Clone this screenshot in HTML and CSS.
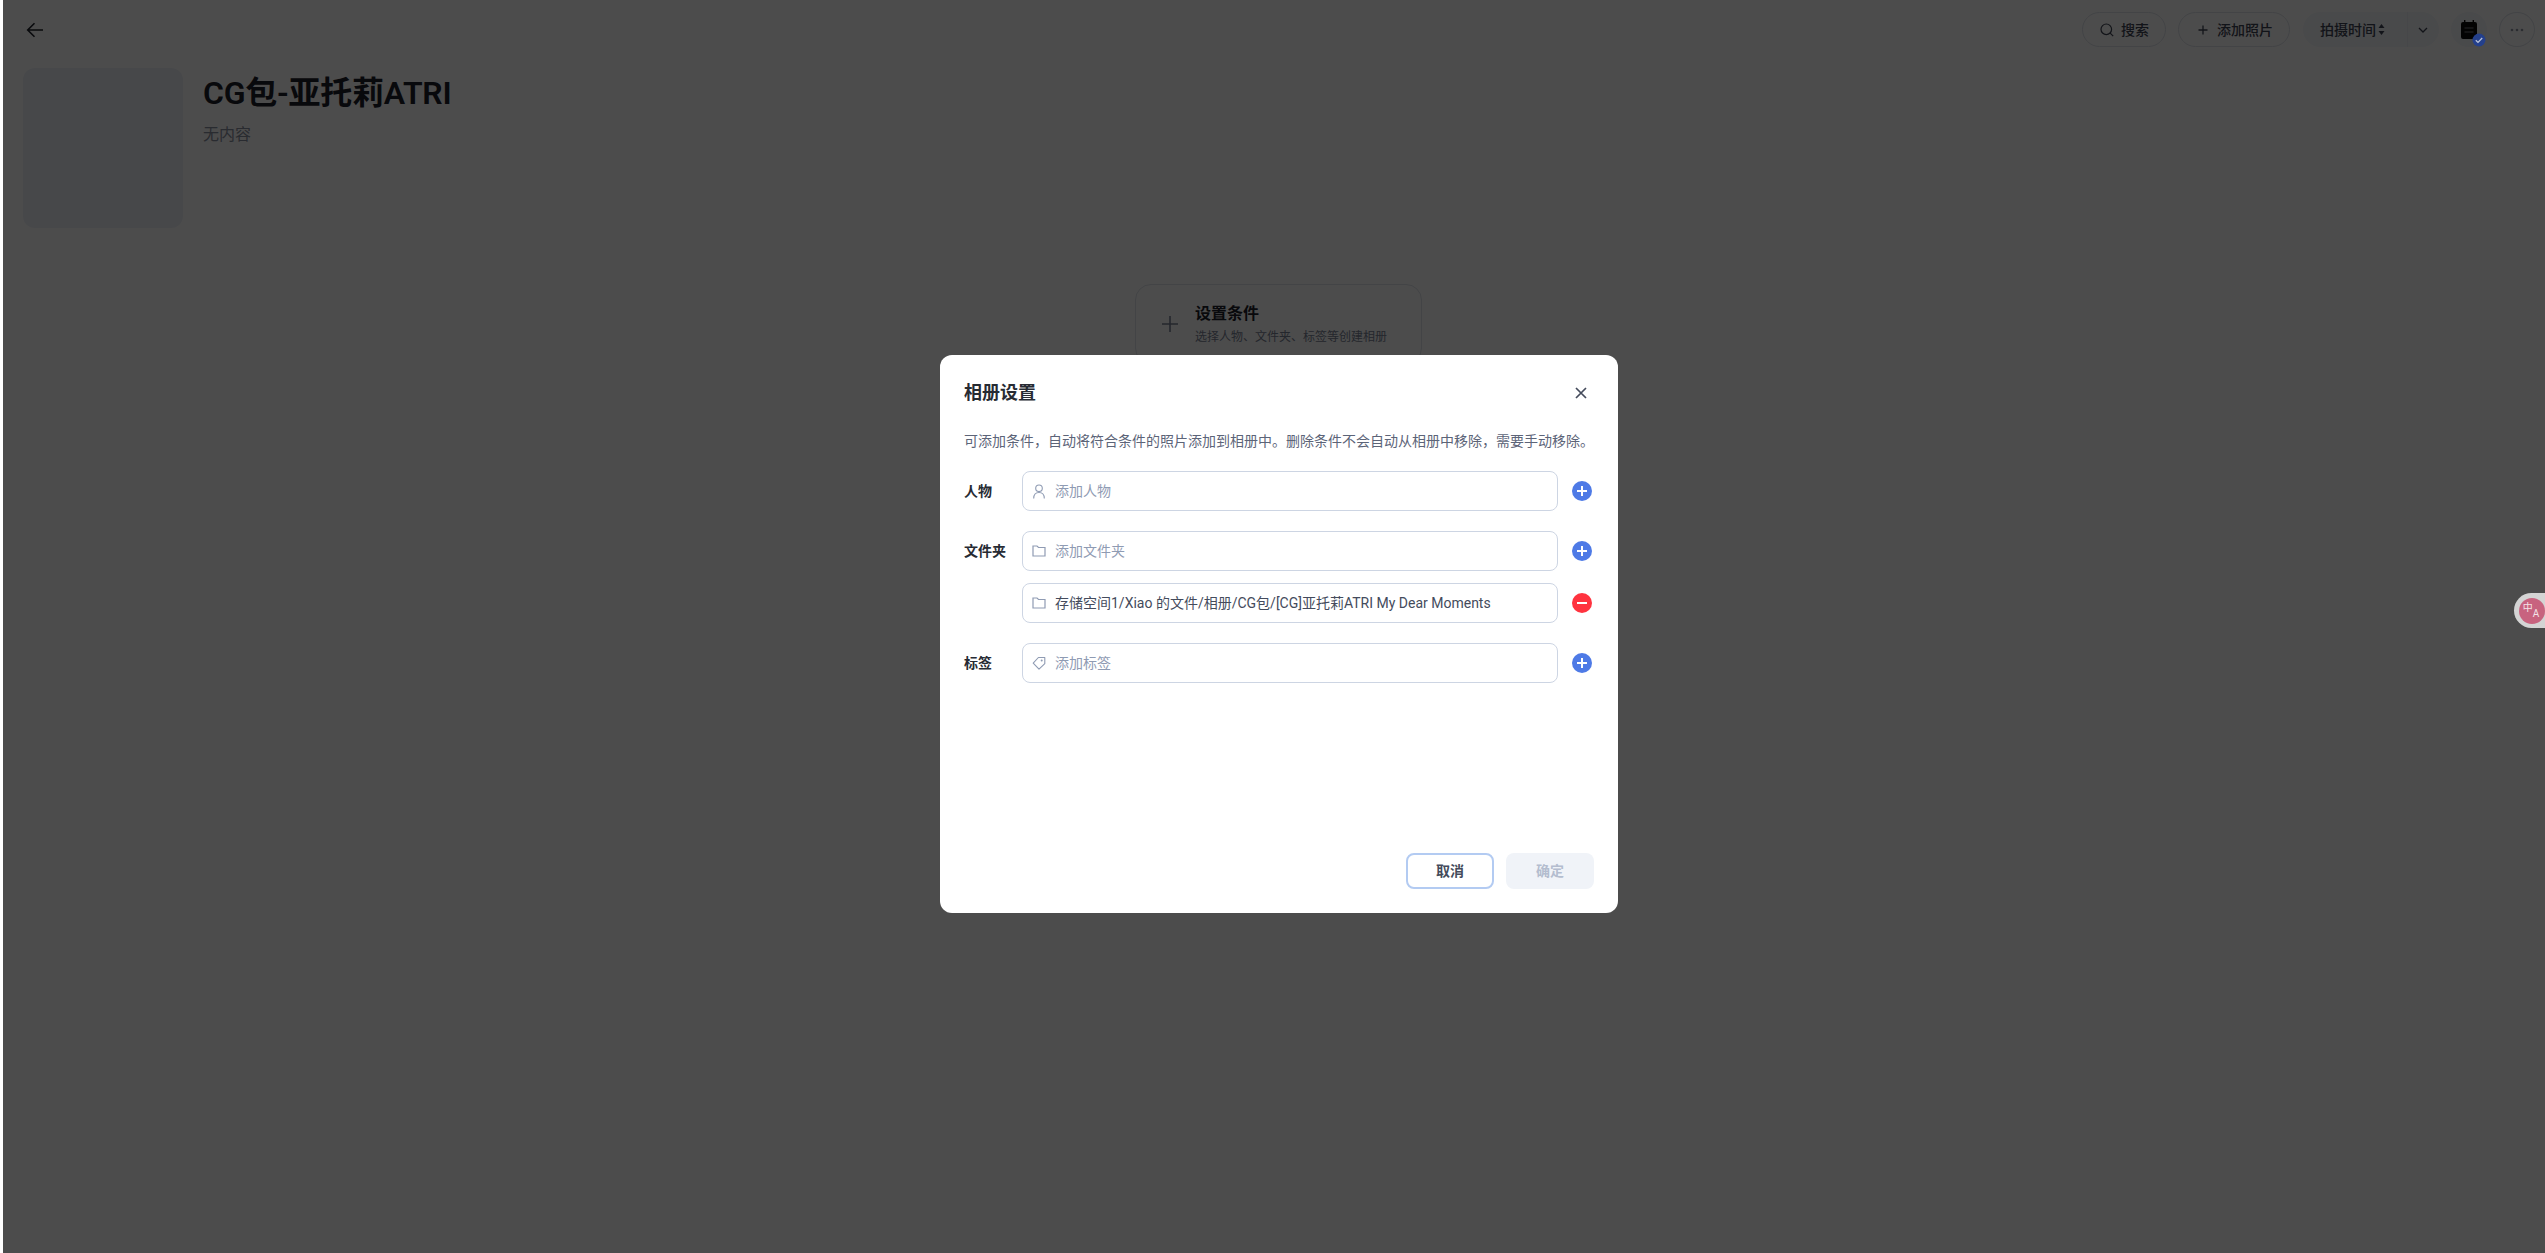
FILE: index.html
```html
<!DOCTYPE html>
<html lang="zh-CN">
<head>
    <meta charset="UTF-8">
    <title>相册设置</title>
    <link rel="stylesheet" href="styles.css">
</head>
<body>
    <div class="page">
        <div class="topbar">
            <svg class="back-icon" width="18" height="18" viewBox="0 0 18 18"><path d="M17 9H2M8.500 2.200 1.700 9l6.800 6.800" fill="none" stroke="currentColor" stroke-width="1.600"/></svg>
            <div class="toolbar">
                <div class="pill">
                    <svg width="14" height="14" viewBox="0 0 14 14"><circle cx="6.300" cy="6.300" r="5.300" fill="none" stroke="currentColor" stroke-width="1.200"/><path d="m10.200 10.200 3 3" stroke="currentColor" stroke-width="1.200"/></svg>
                    <span>搜索</span>
                </div>
                <div class="pill pill-add">
                    <svg width="10" height="10" viewBox="0 0 10 10"><path d="M5 .5v9M.5 5h9" stroke="currentColor" stroke-width="1.300"/></svg>
                    <span>添加照片</span>
                </div>
                <div class="sort">
                    <div class="sort-label">
                        <span>拍摄时间</span>
                        <svg width="7" height="11" viewBox="0 0 7 11"><path d="M3.500 0 6.500 4h-6zM3.500 11 .5 7h6z" fill="currentColor"/></svg>
                    </div>
                    <div class="sort-arrow">
                        <svg width="10" height="6" viewBox="0 0 10 6"><path d="m1 1 4 4 4-4" fill="none" stroke="currentColor" stroke-width="1.300"/></svg>
                    </div>
                </div>
                <div class="round round-fill">
                    <svg width="16" height="19" viewBox="0 0 16 19"><path d="M3 0h1.400v2h7.200V0H13v2h1a2 2 0 0 1 2 2v13a2 2 0 0 1-2 2H2a2 2 0 0 1-2-2V4a2 2 0 0 1 2-2h1z" fill="#0b0b0c"/><path d="M3.500 8h9M3.500 12h9" stroke="#5a5a5a" stroke-width="1.600"/></svg>
                    <svg class="note-badge" width="14" height="14" viewBox="0 0 14 14"><circle cx="7" cy="7" r="6.500" fill="#24408c"/><path d="m3.800 7.200 2.200 2.200 4.200-4.400" fill="none" stroke="#b9c2d8" stroke-width="1.300"/></svg>
                </div>
                <div class="round round-line">
                    <svg width="14" height="4" viewBox="0 0 14 4"><circle cx="2" cy="2" r="1.300" fill="currentColor"/><circle cx="7" cy="2" r="1.300" fill="currentColor"/><circle cx="12" cy="2" r="1.300" fill="currentColor"/></svg>
                </div>
            </div>
        </div>

        <div class="hero">
            <div class="cover"></div>
            <div class="hero-info">
                <h1>CG包-亚托莉ATRI</h1>
                <p>无内容</p>
            </div>
        </div>

        <div class="empty">
            <div class="empty-card">
                <svg width="18" height="18" viewBox="0 0 18 18"><path d="M9 1v16M1 9h16" stroke="currentColor" stroke-width="1.600"/></svg>
                <div>
                    <div class="empty-title">设置条件</div>
                    <div class="empty-desc">选择人物、文件夹、标签等创建相册</div>
                </div>
            </div>
        </div>
    </div>

    <div class="overlay">
        <div class="dialog">
            <div class="dialog-head">
                <h2>相册设置</h2>
                <svg class="close-icon" width="12" height="12" viewBox="0 0 12 12"><path d="m1 1 10 10M11 1 1 11" stroke="currentColor" stroke-width="1.700"/></svg>
            </div>
            <p class="dialog-desc">可添加条件，自动将符合条件的照片添加到相册中。删除条件不会自动从相册中移除，需要手动移除。</p>

            <div class="form">
                <div class="form-group">
                    <div class="form-row">
                        <label>人物</label>
                        <div class="field">
                            <svg width="14" height="15" viewBox="0 0 14 15"><circle cx="7" cy="4.300" r="3.300" fill="none" stroke="currentColor" stroke-width="1.100"/><path d="M1.700 14.500c0-3.300 1.800-6 5.300-6s5.300 2.700 5.300 6" fill="none" stroke="currentColor" stroke-width="1.100"/></svg>
                            <span>添加人物</span>
                        </div>
                        <svg class="action" width="20" height="20" viewBox="0 0 20 20"><circle cx="10" cy="10" r="10" fill="#4e7ae6"/><path d="M10 5v10M5 10h10" stroke="#fff" stroke-width="2"/></svg>
                    </div>
                </div>

                <div class="form-group">
                    <div class="form-row">
                        <label>文件夹</label>
                        <div class="field">
                            <svg width="14" height="12" viewBox="0 0 14 12"><path d="M1 1h4l1.500 1.500H13V11H1z" fill="none" stroke="currentColor" stroke-width="1.200"/></svg>
                            <span>添加文件夹</span>
                        </div>
                        <svg class="action" width="20" height="20" viewBox="0 0 20 20"><circle cx="10" cy="10" r="10" fill="#4e7ae6"/><path d="M10 5v10M5 10h10" stroke="#fff" stroke-width="2"/></svg>
                    </div>
                    <div class="form-row">
                        <label></label>
                        <div class="field field-filled">
                            <svg width="14" height="12" viewBox="0 0 14 12"><path d="M1 1h4l1.500 1.500H13V11H1z" fill="none" stroke="currentColor" stroke-width="1.200"/></svg>
                            <span>存储空间1/Xiao 的文件/相册/CG包/[CG]亚托莉ATRI My Dear Moments</span>
                        </div>
                        <svg class="action" width="20" height="20" viewBox="0 0 20 20"><circle cx="10" cy="10" r="10" fill="#ff333f"/><path d="M5 10h10" stroke="#fff" stroke-width="2"/></svg>
                    </div>
                </div>

                <div class="form-group">
                    <div class="form-row">
                        <label>标签</label>
                        <div class="field">
                            <svg width="14" height="14" viewBox="0 0 14 14"><path d="M1.200 7.200 6.400 1.500h6.400v6.100L7 13.200z" fill="none" stroke="currentColor" stroke-width="1.100" stroke-linejoin="round"/><circle cx="9.700" cy="4.600" r="1" fill="currentColor"/></svg>
                            <span>添加标签</span>
                        </div>
                        <svg class="action" width="20" height="20" viewBox="0 0 20 20"><circle cx="10" cy="10" r="10" fill="#4e7ae6"/><path d="M10 5v10M5 10h10" stroke="#fff" stroke-width="2"/></svg>
                    </div>
                </div>
            </div>

            <div class="dialog-foot">
                <button class="btn btn-cancel">取消</button>
                <button class="btn btn-ok">确定</button>
            </div>
        </div>
    </div>

    <div class="translate-float">
        <div class="translate-dot"><span class="translate-zh">中</span><span class="translate-a">A</span></div>
    </div>
</body>
</html>
```

FILE: styles.css
```css
* {
    box-sizing: border-box;
}

html, body {
    height: 100%;
}

body {
    margin: 0;
    overflow: hidden;
    background-color: #fff;
    color: #1d2129;
    font-family: Roboto, "Noto Sans CJK SC", sans-serif;
}

svg {
    flex: none;
    display: block;
}

.page {
    height: 100%;
}

/* top bar */
.topbar {
    display: flex;
    justify-content: space-between;
    padding: 12px 10px 0 26px;
}

.back-icon {
    margin-top: 9px;
}

.toolbar {
    display: flex;
    align-items: center;
    gap: 12px;
    height: 35px;
    color: #3f4554;
    font-size: 14px;
    font-weight: 500;
    line-height: 20px;
}

.pill {
    display: flex;
    align-items: center;
    gap: 7px;
    width: 84px;
    height: 35px;
    padding-left: 17px;
    border: 1px solid #dfe3ea;
    border-radius: 18px;
}

.pill-add {
    gap: 9px;
    width: 112px;
    padding-left: 19px;
}

.sort {
    display: flex;
    width: 136px;
    height: 35px;
    margin-left: 1px;
    background-color: #f5f7fa;
    border-radius: 18px;
}

.sort-label {
    display: flex;
    align-items: center;
    gap: 2px;
    width: 105px;
    padding-left: 17px;
    border-right: 1px solid #eceff4;
}

.sort-arrow {
    display: flex;
    align-items: center;
    padding-left: 10px;
}

.round {
    position: relative;
    display: flex;
    align-items: center;
    justify-content: center;
    width: 36px;
    height: 35px;
    border-radius: 50%;
}

.round-fill {
    background-color: #f5f7fa;
}

.round-line {
    border: 1px solid #dfe3ea;
    color: #8f96a6;
}

/* sits above the dim layer in the reference */
.note-badge {
    position: absolute;
    right: 1px;
    bottom: 0;
    z-index: 20;
}

/* album header */
.hero {
    display: flex;
    gap: 20px;
    margin-top: 21px;
    padding-left: 23px;
}

.cover {
    width: 160px;
    height: 160px;
    background-color: #eef2f8;
    border-radius: 12px;
}

.hero-info h1 {
    margin: 5px 0 0;
    font-size: 32px;
    font-weight: 600;
    line-height: 40px;
    letter-spacing: -0.25px;
}

.hero-info p {
    margin: 10px 0 0;
    color: #8a90a0;
    font-size: 16px;
    line-height: 24px;
}

/* empty state */
.empty {
    display: flex;
    justify-content: center;
    margin-top: 56px;
    padding-left: 12px;
}

.empty-card {
    display: flex;
    align-items: center;
    gap: 16px;
    width: 287px;
    height: 80px;
    padding: 0 25px;
    border: 1px solid #dfe3ea;
    border-radius: 16px;
    color: #7a8296;
}

.empty-title {
    color: #1d2129;
    font-size: 16px;
    font-weight: 600;
    line-height: 22px;
}

.empty-desc {
    margin-top: 3px;
    color: #7a8296;
    font-size: 12px;
    line-height: 18px;
}

/* dialog */
.overlay {
    position: fixed;
    top: 0;
    right: 0;
    bottom: 0;
    left: 3px;
    z-index: 10;
    display: flex;
    align-items: center;
    justify-content: center;
    padding: 15px 0 0 10px;
    background-color: rgba(0, 0, 0, 0.7);
}

.dialog {
    display: flex;
    flex-direction: column;
    width: 678px;
    height: 558px;
    padding: 24px;
    background-color: #fff;
    border-radius: 12px;
}

.dialog-head {
    display: flex;
    align-items: center;
    justify-content: space-between;
    height: 26px;
    padding-right: 7px;
}

.dialog-head h2 {
    margin: 2px 0 0;
    color: #272b33;
    font-size: 18px;
    font-weight: 600;
    line-height: 26px;
}

.close-icon {
    margin-top: 2px;
    color: #444b5c;
}

.dialog-desc {
    margin: 25px -10px 0 0;
    color: #5c6478;
    font-size: 14px;
    line-height: 22px;
    white-space: nowrap;
}

.form {
    display: flex;
    flex-direction: column;
    gap: 20px;
    margin-top: 19px;
}

.form-group {
    display: flex;
    flex-direction: column;
    gap: 12px;
}

.form-row {
    display: flex;
    align-items: center;
}

.form-row label {
    width: 58px;
    color: #272b33;
    font-size: 14px;
    font-weight: 600;
    line-height: 20px;
}

.field {
    display: flex;
    align-items: center;
    gap: 9px;
    width: 536px;
    height: 40px;
    padding-left: 9px;
    border: 1px solid #cdd5e3;
    border-radius: 8px;
    color: #8f9bb3;
    font-size: 14px;
    line-height: 20px;
}

.field svg {
    color: #8f9bb3;
}

.field-filled {
    color: #444b5c;
}

.action {
    margin-left: 14px;
}

.dialog-foot {
    display: flex;
    justify-content: flex-end;
    gap: 12px;
    margin-top: auto;
}

.btn {
    width: 88px;
    height: 36px;
    padding: 0;
    border-radius: 8px;
    font-family: inherit;
    font-size: 14px;
    font-weight: 600;
    line-height: 20px;
}

.btn-cancel {
    background-color: #fff;
    border: 2px solid #b3cbf2;
    color: #444b5c;
}

.btn-ok {
    background-color: #f0f3f8;
    border: none;
    color: #b4bdcf;
}

/* translate widget floating on the right edge */
.translate-float {
    position: fixed;
    top: 593px;
    right: 0;
    z-index: 30;
    display: flex;
    align-items: center;
    width: 31px;
    height: 35px;
    padding-left: 5px;
    background-color: #d4d4d4;
    border-radius: 18px 0 0 18px;
}

.translate-dot {
    display: flex;
    align-items: center;
    justify-content: center;
    width: 26px;
    height: 26px;
    background-color: #c8637f;
    border-radius: 50%;
    color: #f4e3e8;
    font-size: 10px;
    line-height: 12px;
}

.translate-zh {
    margin: -6px 0 0 -2px;
}

.translate-a {
    margin-top: 7px;
}
```
